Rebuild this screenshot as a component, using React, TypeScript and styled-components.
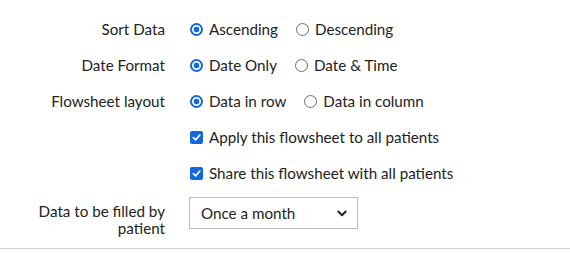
import React, { FC } from 'react';
import styled, { createGlobalStyle } from 'styled-components';

const GlobalStyle = createGlobalStyle`
  html, body {
    margin: 0;
    padding: 0;
    background: #ffffff;
  }
  body {
    font-family: Lato, "Open Sans", "Liberation Sans", sans-serif;
    color: #222222;
  }
`;

type RadioOption = { label: string; checked?: boolean };

const radioRows: { label: string; options: RadioOption[] }[] = [
  { label: 'Sort Data', options: [{ label: 'Ascending', checked: true }, { label: 'Descending' }] },
  { label: 'Date Format', options: [{ label: 'Date Only', checked: true }, { label: 'Date & Time' }] },
  { label: 'Flowsheet layout', options: [{ label: 'Data in row', checked: true }, { label: 'Data in column' }] },
];

const checkRows = ['Apply this flowsheet to all patients', 'Share this flowsheet with all patients'];

const Settings: FC = () => {
  return (
    <FormStyled>
      {radioRows.map((row) => (
        <RowStyled key={row.label}>
          <LabelStyled>{row.label}</LabelStyled>
          <ControlsStyled>
            {row.options.map((opt) => (
              <OptionStyled key={opt.label}>
                <RadioStyled $checked={!!opt.checked} />
                <span>{opt.label}</span>
              </OptionStyled>
            ))}
          </ControlsStyled>
        </RowStyled>
      ))}
      {checkRows.map((text) => (
        <RowStyled key={text}>
          <LabelStyled />
          <ControlsStyled>
            <OptionStyled>
              <CheckboxStyled>
                <svg width="9" height="9" viewBox="0 0 10 10">
                  <path d="M1.5 5.2 L4 7.6 L8.6 2.4" fill="none" stroke="#fff" strokeWidth="1.8" strokeLinecap="round" strokeLinejoin="round" />
                </svg>
              </CheckboxStyled>
              <span>{text}</span>
            </OptionStyled>
          </ControlsStyled>
        </RowStyled>
      ))}
      <SelectRowStyled>
        <LabelStyled $multiline>Data to be filled by patient</LabelStyled>
        <SelectStyled>
          <span>Once a month</span>
          <svg width="10" height="7" viewBox="0 0 10 7">
            <path d="M1.3 1.5 L5 5.2 L8.7 1.5" fill="none" stroke="#222" strokeWidth="2" strokeLinecap="round" strokeLinejoin="round" />
          </svg>
        </SelectStyled>
      </SelectRowStyled>
    </FormStyled>
  );
};

const App: FC = () => (
  <>
    <GlobalStyle />
    <Settings />
  </>
);

export default App;

const FormStyled = styled.div`
  width: 570px;
  padding: 11px 0 11px 0;
  border-bottom: 1px solid #cfcfcf;
  font-size: 15.2px;
`;

const RowStyled = styled.div`
  display: flex;
  align-items: center;
  height: 36px;
`;

const SelectRowStyled = styled.div`
  display: flex;
  align-items: flex-start;
  padding-top: 6px;
`;

const LabelStyled = styled.div<{ $multiline?: boolean }>`
  width: 130px;
  margin-left: 35px;
  margin-right: 24px;
  text-align: right;
  flex-shrink: 0;
  line-height: 17px;
  padding-top: ${(p) => (p.$multiline ? '6px' : '0')};
`;

const ControlsStyled = styled.div`
  display: flex;
  align-items: center;
  gap: 17px;
`;

const OptionStyled = styled.label`
  display: flex;
  align-items: center;
  gap: 6px;
  margin-left: 1px;
`;

const RadioStyled = styled.span<{ $checked: boolean }>`
  box-sizing: border-box;
  width: 13px;
  height: 13px;
  border-radius: 50%;
  border: ${(p) => (p.$checked ? '2px solid #1467dc' : '1px solid #6f6f6f')};
  background: ${(p) =>
    p.$checked ? 'radial-gradient(circle, #1467dc 0 2.6px, #ffffff 3.2px)' : '#ffffff'};
  flex-shrink: 0;
`;

const CheckboxStyled = styled.span`
  box-sizing: border-box;
  width: 13px;
  height: 13px;
  border-radius: 2px;
  background: #1467dc;
  display: flex;
  align-items: center;
  justify-content: center;
  flex-shrink: 0;
`;

const SelectStyled = styled.div`
  box-sizing: border-box;
  width: 169px;
  height: 32px;
  border: 1px solid #bdbdbd;
  background: #ffffff;
  display: flex;
  align-items: center;
  justify-content: space-between;
  padding: 0 10px 0 11px;
`;
